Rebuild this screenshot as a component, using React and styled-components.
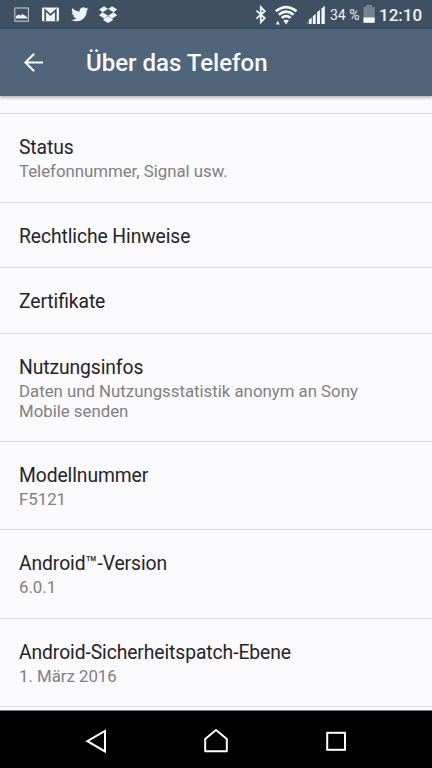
import React from "react";
import styled, { createGlobalStyle } from "styled-components";

const GlobalStyle = createGlobalStyle`
  * { box-sizing: border-box; }
  body { margin: 0; background: #fbfafd; font-family: Roboto, "Noto Sans", sans-serif; }
`;

const Screen = styled.div`
  width: 432px;
  height: 768px;
  display: flex;
  flex-direction: column;
  overflow: hidden;
  background: #fbfafd;
`;

const StatusBar = styled.header`
  height: 29px;
  flex: none;
  display: flex;
  justify-content: space-between;
  background: #3e5062;
  color: #eef2f6;
`;

const Percent = styled.span`
  font-size: 14px;
  line-height: 31px;
  width: 33px;
  margin-left: 4px;
  white-space: nowrap;
`;

const Clock = styled.span`
  font-size: 17px;
  font-weight: 500;
  line-height: 31px;
  width: 53px;
  margin-left: 4px;
`;

const IconGroup = styled.div`
  display: flex;
`;

const Glyph = styled.svg`
  display: block;
  flex: none;
`;

const AppBar = styled.div`
  height: 67px;
  flex: none;
  display: flex;
  align-items: center;
  background: #506579;
  box-shadow: 0 1px 4px rgba(0, 0, 0, 0.4);
  z-index: 1;
`;

const BackButton = styled.button`
  width: 86px;
  height: 67px;
  padding: 0;
  border: 0;
  background: none;
`;

const Title = styled.h1`
  margin: 1px 0 0;
  color: #f8fcff;
  font-size: 24px;
  line-height: 28px;
  font-weight: 500;
`;

const List = styled.main`
  flex: 1;
  min-height: 0;
  overflow: hidden;
  padding-top: 17px;
  border-bottom: 1px solid #777b7b;
`;

const Row = styled.section`
  height: ${(p) => p.$height}px;
  padding: 22px 19px 0;
  border-top: 1px solid #dbdadd;
`;

const RowTitle = styled.h2`
  margin: 0;
  color: #252429;
  font-size: 19.3px;
  line-height: 24px;
  font-weight: 400;
  letter-spacing: -0.08px;
  font-feature-settings: "liga" 1;
`;

const Summary = styled.p`
  margin: 2px 0 0;
  color: #818084;
  font-size: 16.8px;
  line-height: 19.7px;
  white-space: pre-line;
`;

const NavBar = styled.nav`
  height: 57px;
  flex: none;
  display: flex;
  justify-content: center;
  background: #000;
`;

const NavButton = styled.button`
  width: 120px;
  height: 57px;
  padding: 0;
  border: 0;
  background: none;
`;

const rows = [
  { title: "Status", summary: "Telefonnummer, Signal usw.", height: 89 },
  { title: "Rechtliche Hinweise", height: 65 },
  { title: "Zertifikate", height: 66 },
  {
    title: "Nutzungsinfos",
    summary: "Daten und Nutzungsstatistik anonym an Sony\nMobile senden",
    height: 108,
  },
  { title: "Modellnummer", summary: "F5121", height: 88 },
  { title: "Android™-Version", summary: "6.0.1", height: 89 },
  { title: "Android-Sicherheitspatch-Ebene", summary: "1. März 2016", height: 88 },
  { height: 4 },
];

const Notifications = () => (
  <Glyph width="130" height="29" viewBox="0 0 130 29" fill="#edf2f6">
    <rect x="14.8" y="8" width="13.6" height="13.2" fill="none" stroke="#b4c0ca" strokeWidth="1.2" />
    <path d="M16 18.5v-2.2l2.2-1.9 2.2 1 2.2-1.4 4.6 3.2v1.3z" />
    <rect x="42" y="7.5" width="17" height="13.7" rx="1.2" />
    <path d="M45.2 21V10.2l5.3 4.6 5.3-4.6V21" fill="none" stroke="#3e5062" strokeWidth="1.7" />
    <g transform="translate(71.2 5.6) scale(.72)">
      <path d="M23.95 4.57a10 10 0 0 1-2.82.77 4.96 4.96 0 0 0 2.16-2.72c-.95.56-2 .97-3.13 1.2a4.92 4.92 0 0 0-8.38 4.48C7.69 8.1 4.07 6.13 1.64 3.16a4.92 4.92 0 0 0 1.52 6.57 4.9 4.9 0 0 1-2.23-.62v.06a4.92 4.92 0 0 0 3.95 4.83 5 5 0 0 1-2.21.08 4.94 4.94 0 0 0 4.6 3.42A9.87 9.87 0 0 1 0 19.54a13.99 13.99 0 0 0 7.55 2.21c9.05 0 14-7.5 14-13.98l-.02-.64a9.94 9.94 0 0 0 2.42-2.56z" />
    </g>
    <path d="M104.1 6.3l-5.1 3.3 3.6 2.7 5.5-3.2zM112.1 6.3l-4 2.8 5.5 3.2 3.6-2.7zM99 15.3l5.1 3.3 4-2.9-5.5-3.4zM117.2 15.3l-3.6-3-5.5 3.4 4 2.9zM103.4 19.2l4.7-3 4.7 3v1l-4.7 2.9-4.7-2.9z" />
  </Glyph>
);

const Connectivity = () => (
  <Glyph width="73" height="29" viewBox="253 0 73 29" fill="none" stroke="#f2f5f8">
    <path d="M256.4 10.6l8.4 7.5-4 4.1V7l4 4.1-8.4 7.5" strokeWidth="1.8" />
    <path d="M275.8 11.3q10.3-8.4 20.8 0M278.8 14.7q7.4-6 14.8 0M281.8 18q4.4-3.7 8.8 0" strokeWidth="2.7" />
    <path d="M283.3 20.6q2.8-1.9 5.6 0l-2.8 3.8zM275.8 24.6l2-3.8 2 3.8z" fill="#f2f5f8" stroke="none" />
    <path d="M308.8 24v-4.3l2.9-2.3V24zM312.8 24v-7.7l2.9-2.5V24zM317 24V12.3l3-2.6V24zM321.4 24V8.6l3.4-2.9V24z" fill="#f2f5f8" stroke="none" />
    <path d="M307.8 24v-3.6L306.8 24z" fill="#8996a3" stroke="none" />
  </Glyph>
);

const Battery = () => (
  <Glyph width="12" height="29" viewBox="0 0 12 29">
    <path d="M3 5h6v2h2.7v15.7H.5V7H3z" fill="#768492" />
    <path d="M.5 17.5h11.2v5.2H.5z" fill="#fbfcfc" />
  </Glyph>
);

export default function App() {
  return (
    <>
      <GlobalStyle />
      <Screen>
        <StatusBar>
          <Notifications />
          <IconGroup>
            <Connectivity />
            <Percent>34 %</Percent>
            <Battery />
            <Clock>12:10</Clock>
          </IconGroup>
        </StatusBar>
        <AppBar>
          <BackButton aria-label="Zurück">
            <Glyph width="86" height="67" viewBox="0 29 86 67" fill="none" stroke="#f7fcff" strokeWidth="2">
              <path d="M43 62.5H26M34.2 53.8l-8.8 8.7 8.8 8.7" />
            </Glyph>
          </BackButton>
          <Title>Über das Telefon</Title>
        </AppBar>
        <List>
          {rows.map((row) => (
            <Row key={row.title || "next"} $height={row.height}>
              {row.title && <RowTitle>{row.title}</RowTitle>}
              {row.summary && <Summary>{row.summary}</Summary>}
            </Row>
          ))}
        </List>
        <NavBar>
          <NavButton aria-label="Zurück">
            <Glyph width="120" height="57" viewBox="36 711 120 57" fill="none" stroke="#fff" strokeWidth="2">
              <path d="M87.4 741.2l17.6-10.2v20.4z" />
            </Glyph>
          </NavButton>
          <NavButton aria-label="Startseite">
            <Glyph width="120" height="57" viewBox="156 711 120 57" fill="none" stroke="#fff" strokeWidth="2">
              <path d="M205.2 751.3v-12.2l10.8-9.2 10.8 9.2v12.2z" strokeLinejoin="round" />
            </Glyph>
          </NavButton>
          <NavButton aria-label="Übersicht">
            <Glyph width="120" height="57" viewBox="276 711 120 57" fill="none" stroke="#fff" strokeWidth="2">
              <rect x="327.2" y="732.8" width="17.8" height="17" />
            </Glyph>
          </NavButton>
        </NavBar>
      </Screen>
    </>
  );
}
